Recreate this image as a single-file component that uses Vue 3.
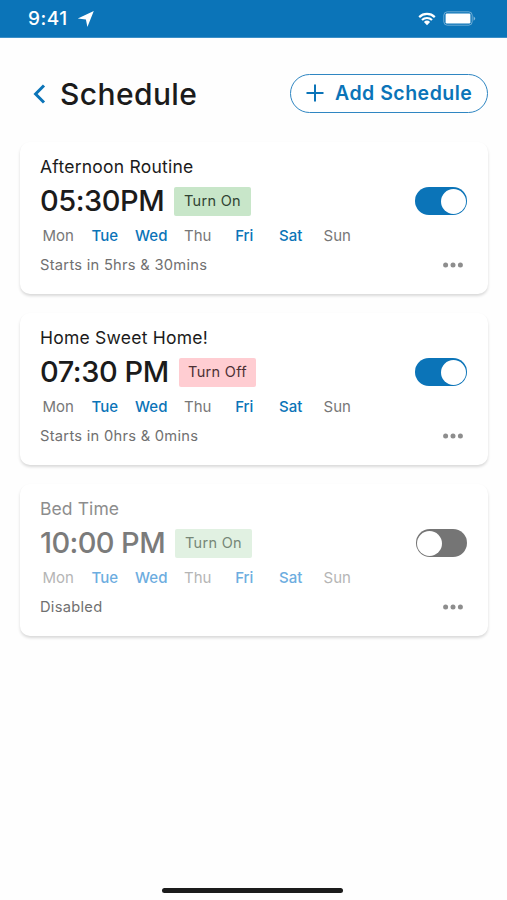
<script setup>
import { ref } from 'vue'

const days = ['Mon', 'Tue', 'Wed', 'Thu', 'Fri', 'Sat', 'Sun']
const active = ['Tue', 'Wed', 'Fri', 'Sat']

const schedules = ref([
  { id: 'afternoon', name: 'Afternoon Routine', time: '05:30PM', action: 'Turn On', status: 'Starts in 5hrs & 30mins', on: true },
  { id: 'home', name: 'Home Sweet Home!', time: '07:30 PM', action: 'Turn Off', status: 'Starts in 0hrs & 0mins', on: true },
  { id: 'bed', name: 'Bed Time', time: '10:00 PM', action: 'Turn On', status: 'Disabled', on: false }
])
</script>

<template>
  <div class="screen">
    <div class="status-bar">
      <span class="clock">9:41</span>
      <svg class="location" width="18" height="18" viewBox="0 0 18 18"><path d="M16.8 1 10.4 17 8.9 9.4 .8 8.4Z" fill="#fff" /></svg>
      <svg class="wifi" width="18" height="14" viewBox="0 0 18 14">
        <path d="M1.2 5.1a11.2 11.2 0 0 1 15.6 0M4 8a7.2 7.2 0 0 1 10 0" fill="none" stroke="#fff" stroke-width="2.2" />
        <path d="M5.9 10a4.5 4.5 0 0 1 6.2 0L9 13.2Z" fill="#fff" />
      </svg>
      <svg class="battery" width="33" height="15" viewBox="0 0 33 15">
        <rect x=".8" y=".8" width="28.4" height="13.4" rx="3.5" fill="none" stroke="#fff" stroke-opacity=".4" />
        <rect x="2.6" y="2.6" width="24.8" height="9.8" rx="1.2" fill="#fff" />
        <path d="M30.6 5.2q3 2.3 0 4.6Z" fill="#fff" fill-opacity=".5" />
      </svg>
    </div>

    <header class="header">
      <svg class="back" width="13" height="20" viewBox="0 0 13 20"><path d="M11 1.5 2.6 10l8.4 8.5" fill="none" stroke="#0b74b8" stroke-width="3" /></svg>
      <h1 class="title">Schedule</h1>
      <button class="add" type="button">
        <svg width="18" height="18" viewBox="0 0 18 18"><path d="M9 .5v17M.5 9h17" fill="none" stroke="#0b74b8" stroke-width="2" /></svg>
        <span>Add Schedule</span>
      </button>
    </header>

    <main class="list">
      <section v-for="s in schedules" :key="s.id" class="card" :class="[s.id, { disabled: !s.on }]">
        <div class="name">{{ s.name }}</div>
        <div class="time-row">
          <span class="time">{{ s.time }}</span>
          <span class="badge" :class="{ off: s.action === 'Turn Off' }">{{ s.action }}</span>
          <button class="toggle" type="button" role="switch" :aria-checked="s.on" @click="s.on = !s.on">
            <span class="knob"></span>
          </button>
        </div>
        <div class="days">
          <span v-for="d in days" :key="d" class="day" :class="{ active: active.includes(d) }">{{ d }}</span>
        </div>
        <div class="footer">
          <span class="status">{{ s.status }}</span>
          <svg width="20" height="6" viewBox="0 0 20 6" fill="#8d8d8d"><circle cx="2.6" cy="3" r="2.5" /><circle cx="10" cy="3" r="2.5" /><circle cx="17.4" cy="3" r="2.5" /></svg>
        </div>
      </section>
    </main>

    <div class="home-indicator"></div>
  </div>
</template>

<style>
body {
  background: #fefefe;
}
</style>

<style scoped>
.screen {
  display: flex;
  flex-direction: column;
  width: 507px;
  height: 900px;
  overflow: hidden;
  box-sizing: border-box;
  background: #fefefe;
  color: #1b1b1b;
  font-family: Inter, "Liberation Sans", sans-serif;
}
button {
  font: inherit;
  cursor: pointer;
}
.status-bar {
  display: flex;
  align-items: center;
  flex: none;
  box-sizing: border-box;
  height: 38px;
  padding: 0 31px 0 28px;
  border-bottom: 1px solid #3c8fc7;
  background: #0b74b8;
  color: #fff;
}
.clock {
  width: 41px;
  font-size: 19px;
  font-weight: 550;
  letter-spacing: 0.5px;
  white-space: nowrap;
}
.location {
  margin-left: 8px;
}
.wifi {
  margin-left: auto;
}
.battery {
  margin-left: 7px;
}
.header {
  display: flex;
  align-items: center;
  flex: none;
  height: 39px;
  margin-top: 36px;
  padding: 0 19px 0 33px;
}
.title {
  margin: 0 0 0 14px;
  font-size: 30px;
  font-weight: 450;
  letter-spacing: 0.4px;
  line-height: 38px;
}
.add {
  display: flex;
  align-items: center;
  gap: 11px;
  box-sizing: border-box;
  width: 198px;
  height: 39px;
  margin-left: auto;
  padding: 0 0 1px 15px;
  border: 1.4px solid #2f86c2;
  border-radius: 20px;
  background: #fff;
  color: #0b74b8;
  font-size: 19.5px;
  font-weight: 600;
  letter-spacing: 0.5px;
  white-space: nowrap;
}
.list {
  display: flex;
  flex-direction: column;
  gap: 19px;
  padding: 29px 19px 0 20px;
}
.card {
  box-sizing: border-box;
  height: 152px;
  padding: 13px 21px 0 20px;
  border-radius: 10px;
  background: #fff;
  box-shadow: 0 2px 3px rgba(0, 0, 0, 0.15);
}
.name {
  font-size: 17.5px;
  line-height: 24px;
  letter-spacing: 0.23px;
}
.time-row {
  display: flex;
  align-items: center;
  height: 30px;
  margin-top: 7px;
}
.time {
  width: 134px;
  font-size: 29px;
  font-weight: 450;
  letter-spacing: -0.45px;
  line-height: 30px;
  white-space: nowrap;
}
.home .time {
  width: 139px;
}
.bed .time {
  width: 135px;
  letter-spacing: -0.6px;
}
.badge {
  width: 77px;
  height: 29px;
  border-radius: 2px;
  background: #c8e6c9;
  color: #304332;
  font-size: 14.5px;
  line-height: 28px;
  text-align: center;
  letter-spacing: 0.3px;
}
.badge.off {
  background: #ffcdd2;
  color: #4c3034;
}
.toggle {
  display: flex;
  align-items: center;
  justify-content: flex-end;
  box-sizing: border-box;
  width: 52px;
  height: 28px;
  margin-left: auto;
  padding: 0 1px;
  border: 0;
  border-radius: 14px;
  background: #0b74b8;
}
.knob {
  width: 25px;
  height: 25px;
  border-radius: 50%;
  background: #fff;
}
.days {
  display: grid;
  grid-template-columns: repeat(7, 46.5px);
  margin: 10px 0 0 -5px;
}
.day {
  color: #777;
  font-size: 15px;
  line-height: 20px;
  text-align: center;
}
.day.active {
  color: #0b74b8;
  font-weight: 500;
}
.footer {
  display: flex;
  align-items: center;
  justify-content: space-between;
  height: 20px;
  margin-top: 9px;
  padding-right: 4px;
}
.status {
  color: #707070;
  font-size: 14.7px;
  line-height: 18px;
  letter-spacing: 0.27px;
}
.disabled .name {
  color: #8d8d8d;
  letter-spacing: 0.1px;
}
.disabled .time {
  color: #7b7b7b;
}
.disabled .badge {
  background: #e1f1e2;
  color: #768777;
}
.disabled .toggle {
  justify-content: flex-start;
  width: 51px;
  background: #757575;
}
.disabled .day {
  color: #b5b5b5;
}
.disabled .day.active {
  color: #6dade0;
}
.home-indicator {
  flex: none;
  width: 181px;
  height: 5px;
  margin: auto auto 7px 162px;
  border-radius: 3px;
  background: #1c1c1c;
}
</style>
